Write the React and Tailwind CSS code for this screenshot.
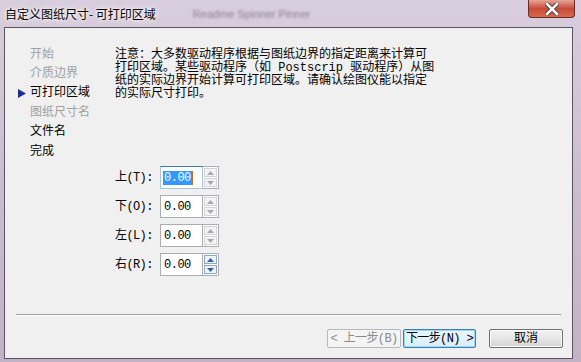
import React from 'react';

const mono = { fontFamily: '"Liberation Mono","Noto Sans CJK SC",monospace' };

const steps = [
  { label: '开始', state: 'off' },
  { label: '介质边界', state: 'off' },
  { label: '可打印区域', state: 'current' },
  { label: '图纸尺寸名', state: 'off' },
  { label: '文件名', state: 'on' },
  { label: '完成', state: 'on' },
];

const fields = [
  { label: '上(T):', focused: true },
  { label: '下(O):' },
  { label: '左(L):' },
  { label: '右(R):', hot: true },
];

const Arrow = ({ up, hot }) => (
  <svg width="7" height="4" viewBox="0 0 7 4">
    <polygon points={up ? '0,4 7,4 3.5,0' : '0,0 7,0 3.5,4'} fill={hot ? '#3b5f9a' : '#a5a9ae'} />
  </svg>
);

const SpinField = ({ label, focused, hot }) => (
  <div className="flex items-center h-[23px]">
    <span className="w-[45px] text-[12px] text-black tracking-[-0.6px]" style={mono}>{label}</span>
    <div className={`flex items-center w-[43px] h-[23px] bg-white border ${focused ? 'border-[#a9c4dd] border-t-[#3d7bad]' : 'border-[#abadb3] border-t-[#abadb3]'}`}>
      <span className="ml-[2px] text-[12px] leading-[12px] tracking-[-0.5px]" style={mono}>
        {focused ? (
          <span className="bg-[#3399ff] text-white px-[1px] border-r border-[#c07020]">0.00</span>
        ) : (
          <span className="px-[1px]">0.00</span>
        )}
      </span>
    </div>
    <div className="flex flex-col h-[23px] w-[16px] border border-l-0 border-[#abadb3] bg-white p-[1px] gap-[1px]">
      <div className={`flex-1 flex items-center justify-center border ${hot ? 'border-[#8ea7c7] bg-[#eef3fa]' : 'border-[#d4d4d4] bg-[#f3f3f3]'}`}>
        <Arrow up hot={hot} />
      </div>
      <div className={`flex-1 flex items-center justify-center border ${hot ? 'border-[#8ea7c7] bg-[#eef3fa]' : 'border-[#d4d4d4] bg-[#f3f3f3]'}`}>
        <Arrow hot={hot} />
      </div>
    </div>
  </div>
);

export default function App() {
  return (
    <div className="w-[581px] h-[362px] flex flex-col overflow-hidden bg-gradient-to-b from-[#d9cedd] via-[#cbbdd0] to-[#c2b2c6]">
      {/* title bar */}
      <div className="relative h-[27px] flex items-start shrink-0">
        <span className="ml-[5px] mt-[5px] text-[12px] text-black" style={{ fontFamily: '"Noto Sans CJK SC",sans-serif', textShadow: '0 0 6px #fff, 0 0 3px #fff' }}>
          自定义图纸尺寸- 可打印区域
        </span>
        <span className="ml-[37px] mt-[6px] text-[11px] text-[#8e8392] blur-[0.8px]" style={{ fontFamily: '"Liberation Sans",sans-serif' }}>
          Readme Spinner Pinner
        </span>
        <div className="absolute left-[528px] top-0 w-[47px] h-[18px] rounded-b-[4px] border border-t-0 border-[#6d2a22] bg-gradient-to-b from-[#e3a596] via-[#c9493a] to-[#d56a4b] flex items-center justify-center">
          <svg width="14" height="12" viewBox="0 0 14 12">
            <path d="M2 1 L12 11 M12 1 L2 11" stroke="#4a3a3a" strokeWidth="4.5" strokeLinecap="square" />
            <path d="M2 1 L12 11 M12 1 L2 11" stroke="#fff" strokeWidth="2.5" strokeLinecap="square" />
          </svg>
        </div>
      </div>

      {/* client area */}
      <div className="ml-[4px] mr-[8px] mb-[3px] flex-1 flex flex-col bg-[#f0f0f0] border border-[#5a5560]" style={mono}>
        <div className="flex flex-1">
          {/* steps */}
          <div className="w-[110px] pt-[17px] flex flex-col">
            {steps.map((s) => (
              <div key={s.label} className="h-[19.4px] flex items-center">
                <span className="w-[25px] flex justify-end pr-[4px]">
                  {s.state === 'current' && (
                    <svg width="8" height="9" viewBox="0 0 8 9">
                      <polygon points="0,0 8,4.5 0,9" fill="#1a2d8c" />
                    </svg>
                  )}
                </span>
                <span className={`text-[12px] ${s.state === 'off' ? 'text-[#a0a0a0]' : 'text-black'}`}>{s.label}</span>
              </div>
            ))}
          </div>

          {/* body */}
          <div className="flex flex-col pt-[21px]">
            <p className="text-[12px] leading-[13px] text-black whitespace-nowrap">
              注意：大多数驱动程序根据与图纸边界的指定距离来计算可<br />
              打印区域。某些驱动程序（如 Postscrip 驱动程序）从图<br />
              纸的实际边界开始计算可打印区域。请确认绘图仪能以指定<br />
              的实际尺寸打印。
            </p>
            <div className="mt-[65px] flex flex-col gap-[6px]">
              {fields.map((f) => (
                <SpinField key={f.label} {...f} />
              ))}
            </div>
          </div>
        </div>

        {/* footer */}
        <div className="shrink-0 mx-[11px] border-t border-[#a0a0a0] border-b border-b-white" />
        <div className="h-[42px] shrink-0 flex items-start justify-end gap-[2px] pt-[13px] pr-[9px]">
          <button className="w-[74px] h-[19px] px-0 rounded-[2px] border border-[#b5b9bd] bg-[#f4f4f4] text-[12px] leading-none text-[#8a8a8a] whitespace-nowrap tracking-[-0.6px]" style={mono}>
            &lt; 上一步(B)
          </button>
          <button className="w-[73px] h-[19px] px-0 rounded-[2px] border border-[#3c7fb1] bg-gradient-to-b from-[#eaf6fd] to-[#d9effc] text-[12px] leading-none text-black whitespace-nowrap tracking-[-0.6px] shadow-[inset_0_0_0_1px_#9ed6f5]" style={mono}>
            下一步(N) &gt;
          </button>
          <button className="ml-[11px] w-[74px] h-[19px] px-0 rounded-[2px] border border-[#707070] bg-gradient-to-b from-[#f2f2f2] via-[#e6e6e6] to-[#d3d3d3] text-[12px] leading-none text-black shadow-[inset_0_0_0_1px_#fbfbfb]" style={mono}>
            取消
          </button>
        </div>
      </div>
    </div>
  );
}
